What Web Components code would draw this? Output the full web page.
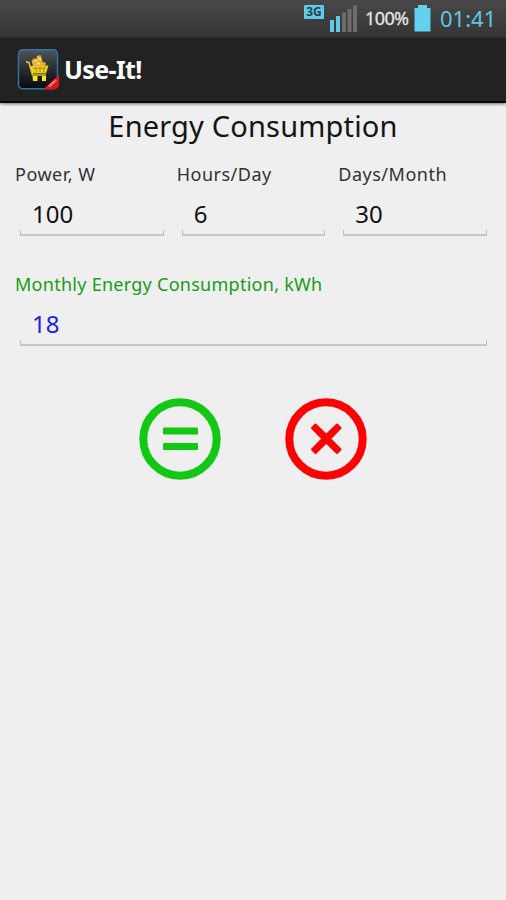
<!DOCTYPE html>
<html lang="en">
<head>
  <meta charset="utf-8">
  <title>Use-It!</title>
  <style>
    body {
      margin: 0;
      background: #efefef;
      font-family: "Noto Sans", "Open Sans", sans-serif;
    }
  </style>
</head>
<body>
  <use-it-app>
    <status-bar slot="top" data-battery="100%" data-time="01:41"></status-bar>
    <app-bar slot="top">Use-It!</app-bar>
    <span slot="title">Energy Consumption</span>
    <number-field slot="inputs" data-label="Power, W" data-value="100"></number-field>
    <number-field slot="inputs" data-label="Hours/Day" data-value="6"></number-field>
    <number-field slot="inputs" data-label="Days/Month" data-value="30"></number-field>
    <number-field slot="result" class="result" data-label="Monthly Energy Consumption, kWh" data-value="18"></number-field>
    <round-button slot="actions" data-icon="equals"></round-button>
    <round-button slot="actions" data-icon="clear"></round-button>
  </use-it-app>

  <script>
    class StatusBar extends HTMLElement {
      connectedCallback() {
        let shadowRoot = this.attachShadow({mode: 'open'});
        shadowRoot.innerHTML = `
          <style>
            :host {
              display: flex;
              justify-content: flex-end;
              height: 38px;
              box-sizing: border-box;
              padding-right: 10px;
              background: linear-gradient(#484848, #343434);
              line-height: 37px;
              white-space: nowrap;
            }
            svg {
              display: block;
              flex: none;
            }
            .net {
              margin: 5px 6px 0 0;
              width: 20px;
              height: 14px;
              border-radius: 1px;
              background: #5fcbe8;
              color: #24454f;
              font: bold 12px/14px "Noto Sans", sans-serif;
              text-align: center;
            }
            .signal {
              margin: 5px 8px 0 0;
            }
            .battery {
              width: 45px;
              color: #e4e4e4;
              font-size: 18px;
              letter-spacing: -0.6px;
              -webkit-text-stroke: 0.3px #e4e4e4;
            }
            .cell {
              margin: 4px 9px 0 4px;
            }
            .time {
              width: 56px;
              color: #62c6e2;
              font-size: 22px;
            }
          </style>
          <span class="net">3G</span>
          <svg class="signal" width="27" height="27" viewBox="0 0 27 27">
            <path fill="#5fcbe8" d="M0 15h4v12H0zM6 11h4v16H6z"/>
            <path fill="#6c6c6c" d="M12 7.500h4V27h-4zM17.500 4h4v23h-4zM23 .5h4V27h-4z"/>
          </svg>
          <span class="battery">${this.getAttribute('data-battery')}</span>
          <svg class="cell" width="17" height="28" viewBox="0 0 17 28">
            <path fill="#62d0ee" d="M4 1h9v3h3.500v23.500H.5V4H4z"/>
          </svg>
          <span class="time">${this.getAttribute('data-time')}</span>
        `;
      }
    }

    class AppBar extends HTMLElement {
      connectedCallback() {
        let shadowRoot = this.attachShadow({mode: 'open'});
        shadowRoot.innerHTML = `
          <style>
            :host {
              display: flex;
              align-items: center;
              height: 65px;
              box-sizing: border-box;
              padding: 0 0 1px 17px;
              border-bottom: 2px solid #080808;
              background: #222;
              box-shadow: 0 1px 3px rgba(0, 0, 0, 0.55);
              color: #fff;
              font-size: 25px;
              font-weight: bold;
              letter-spacing: -0.6px;
            }
            svg {
              margin-right: 5px;
            }
          </style>
          <svg width="42" height="42" viewBox="0 0 42 42">
            <defs>
              <linearGradient id="tile" x2="0" y2="1">
                <stop offset="0" stop-color="#505357"/>
                <stop offset=".5" stop-color="#2a2c30"/>
                <stop offset="1" stop-color="#08090b"/>
              </linearGradient>
              <clipPath id="edge"><rect x="1" y="1" width="41" height="40.500" rx="3"/></clipPath>
            </defs>
            <rect x="1.500" y="1.700" width="39" height="39" rx="4" fill="url(#tile)" stroke="#2a78a5" stroke-width="1.400"/>
            <path d="M9 13.500l3 1.200 3.500 12.300h13.500" fill="none" stroke="#d9c51c" stroke-width="1.600"/>
            <path d="M12.500 18l19-.5-2.500 8H15z" fill="#e9ce1e"/>
            <path d="M16 18l-1.500-5 2.500-3 2 1.500 1-3.500 3.500-1 1.500 4 .5 3 3 .5V18z" fill="#edb02f"/>
            <path d="M18 12l2 1M22 10l1.500 2M20 15.500h3" stroke="#fff0a0" stroke-width="1.500"/>
            <path d="M16 20.500l12.500-.2M18.500 18.500l1 6M23 18.500v6M27.500 18.500l-1 6" stroke="#aa8414" stroke-width=".8"/>
            <path d="M15.500 28h5v5h-4.500zM25 28h4v5h-4z" fill="#eeea24"/>
            <path clip-path="url(#edge)" d="M42 27v11l-3.500 3.500H26z" fill="#e0161b"/>
            <path d="M32 38.500l7-6.500" stroke="#ff9b96" stroke-width="2.200" stroke-dasharray="1.500 .6"/>
          </svg>
          <slot></slot>
        `;
      }
    }

    class NumberField extends HTMLElement {
      connectedCallback() {
        let shadowRoot = this.attachShadow({mode: 'open'});
        shadowRoot.innerHTML = `
          <style>
            :host {
              display: block;
              color: #111;
              white-space: nowrap;
            }
            .label {
              padding-left: 5px;
              color: #333;
              font-size: 18px;
              line-height: 26px;
              letter-spacing: 0.5px;
            }
            .value {
              box-sizing: border-box;
              height: 43px;
              padding: 13px 0 0 22px;
              font-size: 24px;
              line-height: 28px;
            }
            .line {
              box-sizing: border-box;
              height: 6px;
              margin: 0 8px 0 10px;
              border: 1px solid #bcbcbc;
              border-width: 0 1px 2px;
              border-bottom-color: #c6c6c6;
            }
            :host(.result) .label {
              color: #189c18;
              letter-spacing: 0.27px;
            }
            :host(.result) .value {
              color: #2222e4;
            }
          </style>
          <div class="label">${this.getAttribute('data-label')}</div>
          <div class="value">${this.getAttribute('data-value')}</div>
          <div class="line"></div>
        `;
      }
    }

    class RoundButton extends HTMLElement {
      connectedCallback() {
        let icons = {
          equals: {
            color: '#12c812',
            path: '<path fill="currentColor" stroke="currentColor" stroke-width="2" stroke-linejoin="round" d="M25 30.500h33v5H25zM25 46h33v5H25z"/>'
          },
          clear: {
            color: '#fe0000',
            path: '<path fill="currentColor" stroke="currentColor" stroke-width="2" stroke-linejoin="round" d="M30.500 26.500l10.750 10.500L52 26.500l3.500 3.500-10.500 10.750L55.500 51.500 52 55 41.250 44.500 30.500 55 27 51.500l10.500-10.750L27 30z"/>'
          }
        };
        let icon = icons[this.getAttribute('data-icon')];
        let shadowRoot = this.attachShadow({mode: 'open'});
        shadowRoot.innerHTML = `
          <style>
            :host {
              display: block;
              width: 82px;
              height: 82px;
              color: ${icon.color};
            }
            svg {
              display: block;
            }
          </style>
          <svg width="82" height="82" viewBox="0 0 82 82">
            <circle cx="41" cy="41" r="36.700" fill="none" stroke="currentColor" stroke-width="8"/>
            ${icon.path}
          </svg>
        `;
      }
    }

    class UseItApp extends HTMLElement {
      connectedCallback() {
        let shadowRoot = this.attachShadow({mode: 'open'});
        shadowRoot.innerHTML = `
          <style>
            :host {
              display: flex;
              flex-direction: column;
              height: 900px;
              overflow: hidden;
            }
            h1 {
              margin: 0;
              padding-top: 2px;
              color: #151515;
              font-size: 29px;
              font-weight: normal;
              line-height: 41px;
              letter-spacing: 0.17px;
              text-align: center;
              white-space: nowrap;
            }
            .inputs {
              display: grid;
              grid-template-columns: repeat(3, 1fr);
              padding: 15px 11px 0 10px;
            }
            .result {
              padding: 35px 11px 0 10px;
            }
            .actions {
              display: flex;
              justify-content: center;
              gap: 64px;
              padding-top: 52px;
            }
          </style>
          <slot name="top"></slot>
          <h1><slot name="title"></slot></h1>
          <div class="inputs"><slot name="inputs"></slot></div>
          <div class="result"><slot name="result"></slot></div>
          <div class="actions"><slot name="actions"></slot></div>
        `;
      }
    }

    window.customElements.define('status-bar', StatusBar);
    window.customElements.define('app-bar', AppBar);
    window.customElements.define('number-field', NumberField);
    window.customElements.define('round-button', RoundButton);
    window.customElements.define('use-it-app', UseItApp);
  </script>
</body>
</html>
